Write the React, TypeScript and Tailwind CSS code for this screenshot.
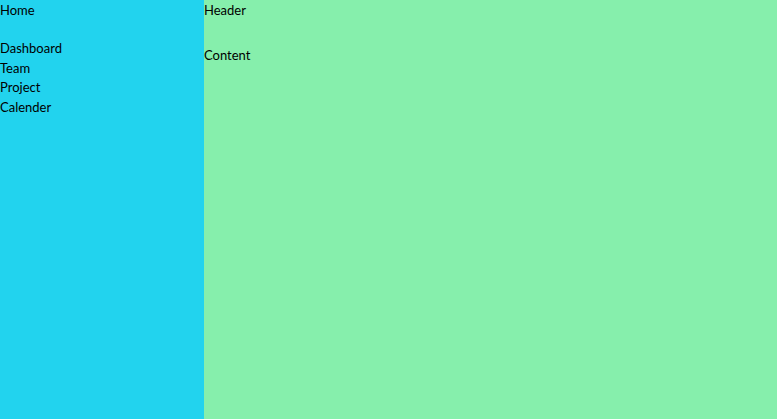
import React from "react";

const navItems = ["Dashboard", "Team", "Project", "Calender"];

const App = () => {
  return (
    <div className="flex h-[419px] w-full font-['Lato',sans-serif] text-[13px] leading-[19.4px] text-black">
      {/* Sidebar */}
      <aside className="w-[204px] shrink-0 bg-[#22d3ee] pt-px">
        <div>Home</div>
        <ul className="mt-[19px]">
          {navItems.map((item) => (
            <li key={item}>{item}</li>
          ))}
        </ul>
      </aside>
      {/* Main */}
      <main className="flex-1 bg-[#86efac] pt-px">
        <header>Header</header>
        <div className="mt-[26px]">Content</div>
      </main>
    </div>
  );
};

export default App;
